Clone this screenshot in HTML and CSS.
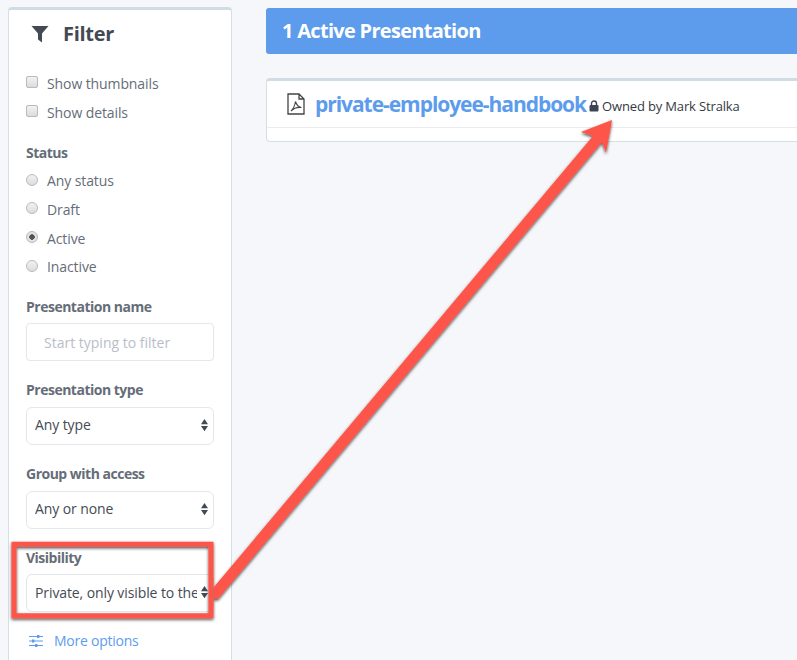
FILE: index.html
```html
<!DOCTYPE html>
<html lang="en">
<head>
<meta charset="utf-8">
<title>Presentations</title>
<link rel="stylesheet" href="styles.css">
</head>
<body>
<div class="page">
  <aside class="sidebar">
    <h2 class="filter-title">
      <svg class="filter-icon" viewBox="0 0 18 18"><path d="M0.5 1H17.5L11 8.5V17.5L7 14.5V8.5Z"/></svg>
      Filter
    </h2>
    <div class="checks">
      <label class="opt"><input type="checkbox">Show thumbnails</label>
      <label class="opt"><input type="checkbox">Show details</label>
    </div>
    <div class="status">
      <div class="lbl">Status</div>
      <label class="opt"><input type="radio" name="s">Any status</label>
      <label class="opt"><input type="radio" name="s">Draft</label>
      <label class="opt"><input type="radio" name="s" checked>Active</label>
      <label class="opt"><input type="radio" name="s">Inactive</label>
    </div>
    <div class="field first">
      <div class="lbl">Presentation name</div>
      <input class="text" type="text" placeholder="Start typing to filter">
    </div>
    <div class="field">
      <div class="lbl">Presentation type</div>
      <div class="sel"><select><option>Any type</option></select><svg class="caret" viewBox="0 0 8 14"><path d="M4 0L8 6H0ZM4 14L0 8H8Z"/></svg></div>
    </div>
    <div class="field">
      <div class="lbl">Group with access</div>
      <div class="sel"><select><option>Any or none</option></select><svg class="caret" viewBox="0 0 8 14"><path d="M4 0L8 6H0ZM4 14L0 8H8Z"/></svg></div>
    </div>
    <div class="field">
      <div class="lbl">Visibility</div>
      <div class="sel"><select><option>Private, only visible to the owner</option></select><svg class="caret" viewBox="0 0 8 14"><path d="M4 0L8 6H0ZM4 14L0 8H8Z"/></svg></div>
    </div>
    <a class="more" href="#">
      <svg class="more-icon" viewBox="0 0 14 14"><path d="M0 2.5H14M0 7H14M0 11.5H14" stroke="#5d9cec" stroke-width="1.2" fill="none"/><rect x="8" y="1" width="2.4" height="3" fill="#5d9cec"/><rect x="3" y="5.5" width="2.4" height="3" fill="#5d9cec"/><rect x="6" y="10" width="2.4" height="3" fill="#5d9cec"/></svg>
      More options
    </a>
  </aside>
  <main class="main">
    <div class="banner">1 Active Presentation</div>
    <div class="card">
      <div class="card-row">
        <svg class="pdf" viewBox="0 0 18 22"><path d="M1 1H12L17 6V21H1Z M12 1V6H17" fill="none" stroke="#444" stroke-width="1.3"/><path d="M4 18C6 16 8 12 8.500 8.500C9.500 12 11 14 14.500 14.500C11 14 7 15 4 18Z" fill="none" stroke="#444" stroke-width="1.1"/></svg>
        <a class="name" href="#">private-employee-handbook</a>
        <svg class="lock" viewBox="0 0 10 12"><path d="M2.500 5V3.500A2.500 2.500 0 0 1 7.500 3.500V5" fill="none" stroke="#3d4454" stroke-width="1.400"/><rect x="0.500" y="5" width="9" height="6.500" rx="1" fill="#3d4454"/></svg>
        <span class="owner">Owned by Mark Stralka</span>
      </div>
      <div class="card-foot"></div>
    </div>
  </main>
</div>
<svg class="annot" viewBox="0 0 797 660" width="797" height="660">
  <defs>
    <filter id="sh" x="-10%" y="-10%" width="120%" height="120%"><feDropShadow dx="0" dy="1.500" stdDeviation="1.500" flood-color="#000" flood-opacity="0.7"/></filter>
  </defs>
  <g filter="url(#sh)">
    <path d="M14 544.300H211V615.700H14Z" fill="none" stroke="#fd5549" stroke-width="5"/>
    <path d="M214 587L593 136L581 132L612 120L606 153L602 142L218 599L214 599Z" fill="#fd5549"/>
  </g>
</svg>
</body>
</html>
```
FILE: styles.css
```css
* { box-sizing: border-box; }
html, body { margin: 0; height: 100%; overflow: hidden; }
body {
  background: #f5f7fa;
  font-family: "Open Sans", "Liberation Sans", sans-serif;
  color: #656d78;
  position: relative;
}
.page {
  display: flex;
  align-items: flex-start;
  gap: 34px;
  padding: 7px 0 0 8px;
  width: 797px;
  height: 660px;
}
.sidebar {
  width: 224px;
  height: 680px;
  flex: none;
  background: #fff;
  border: 1px solid #d5dfe8;
  border-top: 3px solid #d0dce4;
  border-radius: 4px;
  padding: 0 17px;
}
.filter-title {
  display: flex;
  align-items: center;
  gap: 14px;
  margin: 0;
  height: 46px;
  padding: 2px 0 0 5px;
  font-size: 20px;
  line-height: 26px;
  font-weight: 700;
  letter-spacing: -0.3px;
  color: #434a54;
}
.filter-icon { width: 18px; height: 18px; fill: #434a54; }
.checks { margin-top: 13px; }
.opt {
  display: flex;
  align-items: center;
  height: 28.700px;
  font-size: 14px;
  letter-spacing: -0.1px;
}
.opt input {
  appearance: none;
  width: 12px;
  height: 12px;
  margin: 0 9px 2px 0;
  flex: none;
  background: linear-gradient(#f2f2f2, #dcdcdc);
  border: 1px solid #b9b9b9;
  border-radius: 2px;
}
.opt input[type="radio"] { border-radius: 50%; }
.opt input:checked {
  background: radial-gradient(circle, #555 0 2.500px, #e4e4e4 3px);
}
.lbl {
  font-size: 14px;
  line-height: 18px;
  font-weight: 700;
  letter-spacing: -0.5px;
  color: #656d78;
}
.status { margin-top: 18px; }
.status .lbl { margin-bottom: 4px; }
.field { margin-top: 20px; }
.field.first { margin-top: 17px; }
.field .lbl { margin-bottom: 7.700px; }
.field.first .lbl { margin-bottom: 7px; }
.text {
  display: block;
  width: 188px;
  height: 38px;
  border: 1px solid #e1e8ee;
  border-radius: 4px;
  padding: 0 17px;
  font: 14px "Open Sans", sans-serif;
  background: #fff;
}
.text::placeholder { color: #b8bdc9; opacity: 1; }
.sel { position: relative; width: 188px; }
.sel select {
  appearance: none;
  display: block;
  width: 188px;
  height: 38px;
  border: 1px solid #e1e8ee;
  border-radius: 6px;
  background: #fff;
  padding: 0 16px 2px 8px;
  font: 14px "Open Sans", sans-serif;
  letter-spacing: -0.1px;
  color: #434a54;
}
.caret {
  position: absolute;
  right: 6px;
  top: 11px;
  width: 7px;
  height: 14px;
  fill: #434a54;
}
.more {
  display: flex;
  align-items: center;
  gap: 11px;
  margin-top: 19px;
  padding-left: 3px;
  font-size: 14px;
  letter-spacing: -0.25px;
  color: #5d9cec;
  text-decoration: none;
}
.more-icon { width: 14px; height: 14px; flex: none; }
.main { flex: 1; min-width: 0; padding-top: 1px; }
.banner {
  height: 46px;
  background: #5d9cec;
  border-radius: 3px 0 0 3px;
  padding-left: 16px;
  font-size: 20px;
  line-height: 46px;
  font-weight: 700;
  letter-spacing: -0.7px;
  color: #fff;
}
.card {
  margin-top: 24px;
  height: 64px;
  background: #fff;
  border: 1px solid #d5dfe8;
  border-top: 3px solid #d0dce4;
  border-right: 0;
  border-radius: 4px 0 0 4px;
}
.card-row {
  display: flex;
  align-items: center;
  height: 47px;
  padding: 0 0 1px 20px;
  border-bottom: 1px solid #e8ecf0;
}
.pdf { width: 18px; height: 22px; flex: none; }
.name {
  margin-left: 10px;
  font-size: 21px;
  font-weight: 700;
  letter-spacing: -1.05px;
  color: #5d9cec;
  text-decoration: none;
}
.lock { width: 10px; height: 12px; margin: 4px 3px 0 3px; flex: none; }
.owner {
  margin-top: 4px;
  font-size: 13px;
  letter-spacing: -0.15px;
  color: #333a45;
}
.annot { position: absolute; left: 0; top: 0; pointer-events: none; }
```
